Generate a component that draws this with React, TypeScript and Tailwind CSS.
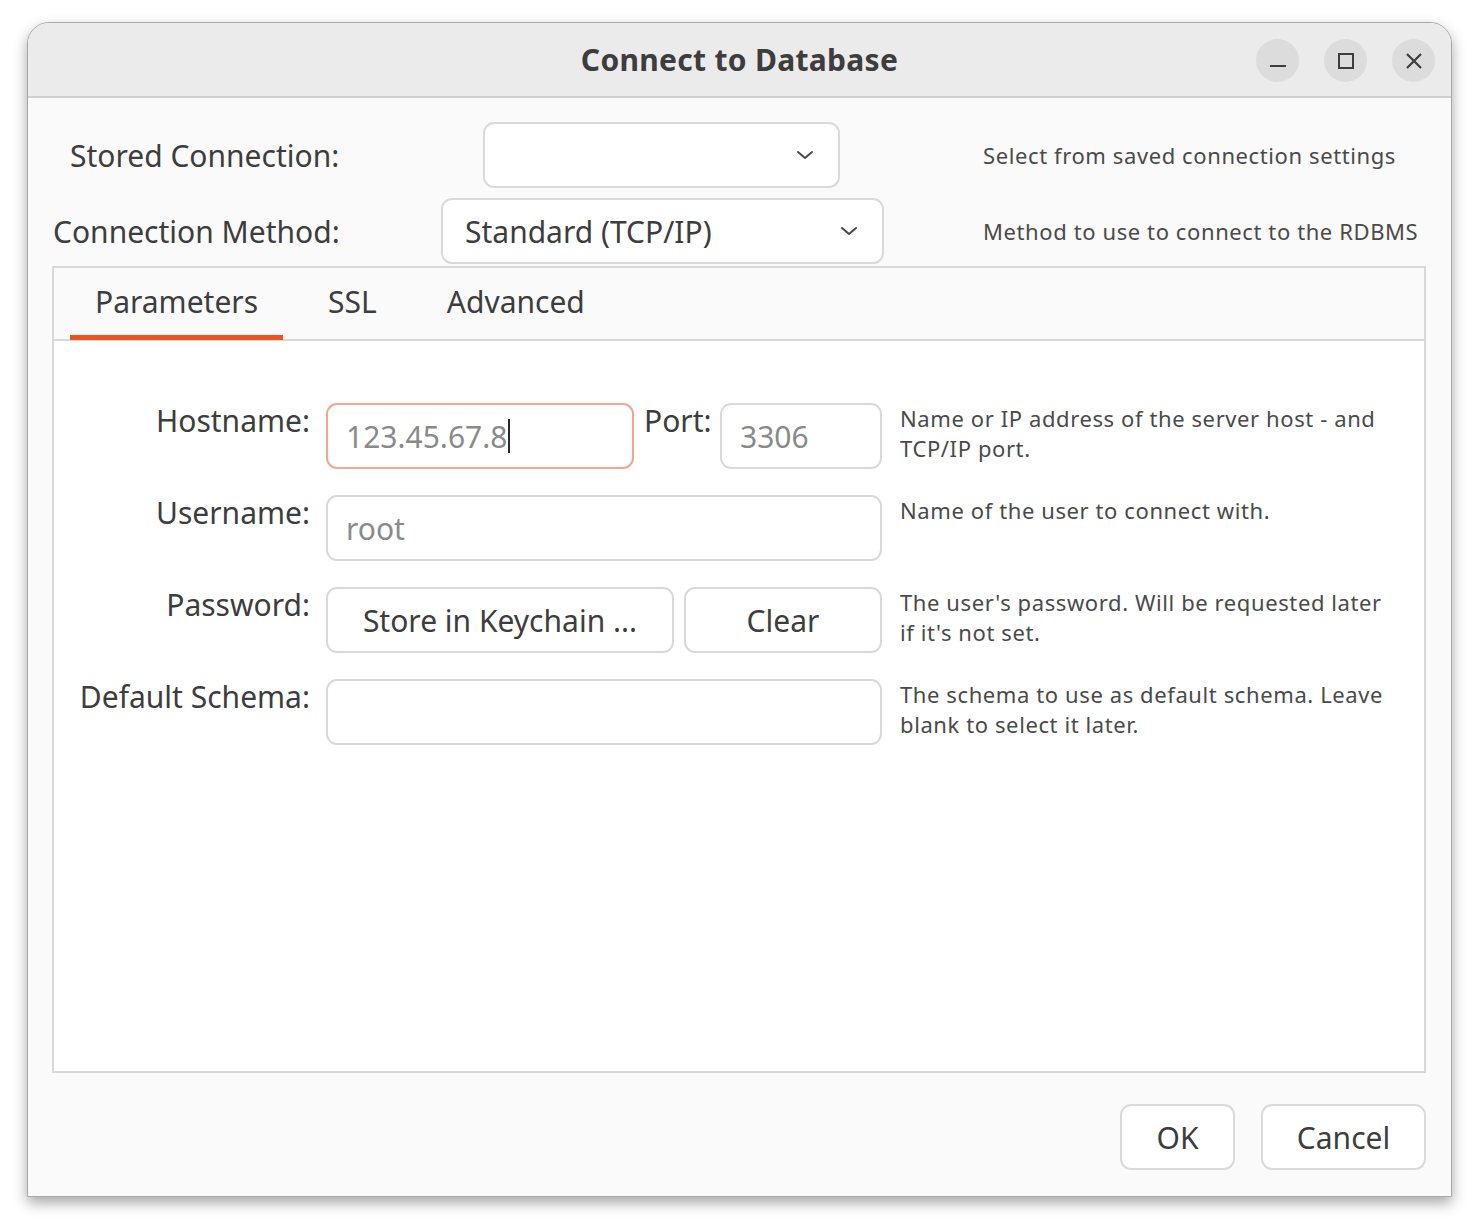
import React from "react";

const FONT = { fontFamily: '"Noto Sans", "Open Sans", sans-serif' };

function Chevron() {
  return (
    <svg width="18" height="10" viewBox="0 0 18 10" fill="none">
      <path d="M2 2 L9 8 L16 2" stroke="#4a4a4a" strokeWidth="2" strokeLinecap="round" strokeLinejoin="round" />
    </svg>
  );
}

function WinButton({ children }: { children: React.ReactNode }) {
  return (
    <div className="w-[43px] h-[43px] rounded-full bg-[#dcdcdc] flex items-center justify-center">{children}</div>
  );
}

function Field({ w, text, focus }: { w: string; text?: string; focus?: boolean }) {
  return (
    <div
      className={`${w} h-[66px] rounded-[11px] bg-white flex items-center pl-[18px] text-[30px] text-[#8a8a8a] ${
        focus ? "border-2 border-[#f4a58b]" : "border-2 border-[#dadada]"
      }`}
    >
      {text}
      {focus && <span className="inline-block w-[2px] h-[34px] bg-[#2a2a2a] ml-[1px]" />}
    </div>
  );
}

function Btn({ w, children }: { w: string; children: React.ReactNode }) {
  return (
    <div className={`${w} h-[66px] rounded-[11px] bg-white border-2 border-[#dadada] flex items-center justify-center text-[30px] text-[#3d3d3d]`}>
      {children}
    </div>
  );
}

function Help({ children }: { children: React.ReactNode }) {
  return <div className="text-[22px] leading-[30px] tracking-[0.6px] text-[#4a4a4a] w-[520px]">{children}</div>;
}

export default function App() {
  return (
    <div className="w-[1478px] h-[1230px] bg-white pt-[22px] pl-[27px]" style={FONT}>
      <div className="w-[1425px] h-[1175px] rounded-t-[22px] border border-[#a9a9a9] bg-[#fafafa] overflow-hidden flex flex-col shadow-[0_6px_14px_rgba(0,0,0,0.35)]">
        {/* Title bar */}
        <div className="h-[75px] shrink-0 bg-[#ebebeb] border-b-2 border-[#cfcfcf] grid grid-cols-[1fr_auto_1fr] items-center">
          <div />
          <div className="text-[30px] font-bold text-[#3d3d3d] tracking-[0.3px]">Connect to Database</div>
          <div className="flex justify-end items-center gap-[25px] pr-[16px] pt-[2px]">
            <WinButton>
              <svg width="18" height="18" viewBox="0 0 18 18">
                <path d="M1 14 H17" stroke="#3d3d3d" strokeWidth="2" />
              </svg>
            </WinButton>
            <WinButton>
              <svg width="18" height="18" viewBox="0 0 18 18" fill="none">
                <rect x="2" y="2" width="14" height="14" stroke="#3d3d3d" strokeWidth="2" />
              </svg>
            </WinButton>
            <WinButton>
              <svg width="18" height="18" viewBox="0 0 18 18" fill="none">
                <path d="M2 2 L16 16 M16 2 L2 16" stroke="#3d3d3d" strokeWidth="2.2" />
              </svg>
            </WinButton>
          </div>
        </div>

        {/* Body */}
        <div className="flex-1 flex flex-col px-[24px] pt-[24px]">
          {/* Row 1 */}
          <div className="flex items-center h-[66px]">
            <div className="w-[431px] pl-[18px] text-[30px] text-[#3d3d3d]">Stored Connection:</div>
            <div className="w-[357px] h-[66px] rounded-[11px] bg-white border-2 border-[#dadada] flex items-center justify-end pr-[24px]">
              <Chevron />
            </div>
            <div className="ml-[143px] text-[22px] tracking-[0.6px] text-[#4a4a4a]">Select from saved connection settings</div>
          </div>
          {/* Row 2 */}
          <div className="flex items-center h-[66px] mt-[10px]">
            <div className="w-[389px] pl-[1px] text-[30px] text-[#3d3d3d]">Connection Method:</div>
            <div className="w-[443px] h-[66px] rounded-[11px] bg-white border-2 border-[#dadada] flex items-center justify-between pl-[22px] pr-[24px] text-[30px] text-[#3d3d3d]">
              <span>Standard (TCP/IP)</span>
              <Chevron />
            </div>
            <div className="ml-[99px] text-[22px] tracking-[0.6px] text-[#4a4a4a]">Method to use to connect to the RDBMS</div>
          </div>

          {/* Notebook */}
          <div className="mt-[2px] w-[1374px] h-[807px] border-2 border-[#d8d8d8] flex flex-col">
            <div className="h-[73px] bg-[#fafafa] border-b-2 border-[#d8d8d8] flex items-end pl-[16px] gap-[20px]">
              <div className="h-full flex flex-col justify-between">
                <div className="flex-1 flex items-center px-[25px] text-[30px] text-[#3d3d3d]">Parameters</div>
                <div className="h-[5px] bg-[#e95420] mb-[-1px]" />
              </div>
              <div className="h-full flex items-center px-[25px] pb-[5px] text-[30px] text-[#3d3d3d]">SSL</div>
              <div className="h-full flex items-center px-[25px] pb-[5px] text-[30px] text-[#3d3d3d]">Advanced</div>
            </div>
            <div className="flex-1 bg-white pt-[62px] flex flex-col gap-[26px]">
              {/* Hostname */}
              <div className="flex">
                <div className="w-[256px] text-right text-[30px] leading-[36px] text-[#3d3d3d]">Hostname:</div>
                <div className="ml-[16px] flex">
                  <Field w="w-[308px]" text="123.45.67.8" focus />
                  <div className="ml-[10px] w-[76px] text-[30px] leading-[36px] text-[#3d3d3d]">Port:</div>
                  <Field w="w-[162px]" text="3306" />
                </div>
                <div className="ml-[18px]">
                  <Help>
                    Name or IP address of the server host - and
                    <br />
                    TCP/IP port.
                  </Help>
                </div>
              </div>
              {/* Username */}
              <div className="flex">
                <div className="w-[256px] text-right text-[30px] leading-[36px] text-[#3d3d3d]">Username:</div>
                <div className="ml-[16px]">
                  <Field w="w-[556px]" text="root" />
                </div>
                <div className="ml-[18px]">
                  <Help>Name of the user to connect with.</Help>
                </div>
              </div>
              {/* Password */}
              <div className="flex">
                <div className="w-[256px] text-right text-[30px] leading-[36px] text-[#3d3d3d]">Password:</div>
                <div className="ml-[16px] flex gap-[10px]">
                  <Btn w="w-[348px]">Store in Keychain ...</Btn>
                  <Btn w="w-[198px]">Clear</Btn>
                </div>
                <div className="ml-[18px]">
                  <Help>
                    The user's password. Will be requested later
                    <br />
                    if it's not set.
                  </Help>
                </div>
              </div>
              {/* Default schema */}
              <div className="flex">
                <div className="w-[256px] text-right text-[30px] leading-[36px] text-[#3d3d3d]">Default Schema:</div>
                <div className="ml-[16px]">
                  <Field w="w-[556px]" />
                </div>
                <div className="ml-[18px]">
                  <Help>
                    The schema to use as default schema. Leave
                    <br />
                    blank to select it later.
                  </Help>
                </div>
              </div>
            </div>
          </div>

          {/* Buttons */}
          <div className="mt-[31px] flex justify-end gap-[26px] w-[1374px]">
            <Btn w="w-[115px]">OK</Btn>
            <Btn w="w-[165px]">Cancel</Btn>
          </div>
        </div>
      </div>
    </div>
  );
}
